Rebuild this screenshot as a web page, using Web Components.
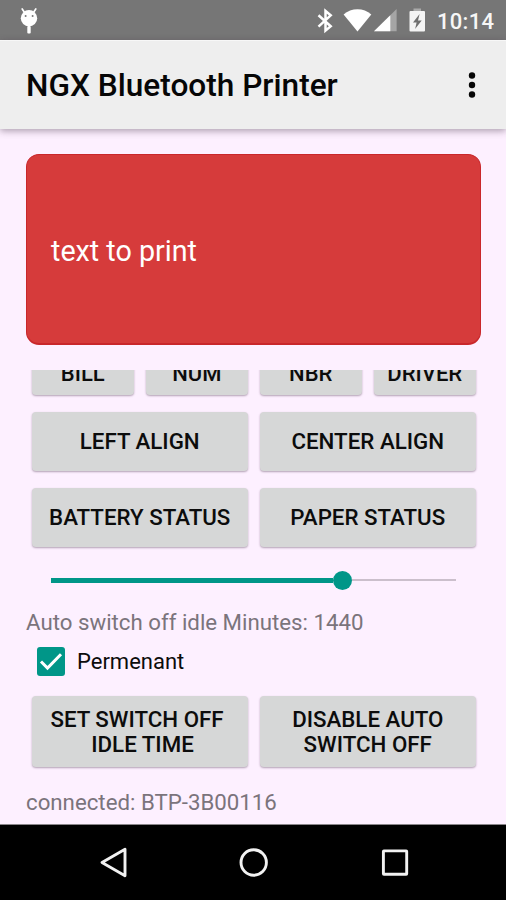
<!DOCTYPE html>
<html lang="en">
<head>
<meta charset="utf-8">
<title>NGX Bluetooth Printer</title>
<style>
html,body{margin:0;height:900px;overflow:hidden;background:#fdf0ff;font-family:Roboto,sans-serif}
</style>
</head>
<body>
<printer-app></printer-app>
<script>
const define = (name, markup) => customElements.define(name, class extends HTMLElement {
  constructor() {
    super();
    const t = document.createElement('template');
    t.innerHTML = markup;
    this.attachShadow({mode: 'open'}).append(t.content.cloneNode(true));
  }
});

define('status-bar', `
<style>
:host{display:flex;height:40px;background:#767676;color:#f6f6f6;align-items:center;flex:none}
svg{display:block;flex:none}
.grow{flex:1}
.clock{font-size:22px;font-weight:500;line-height:26px;letter-spacing:.3px;width:69px;white-space:nowrap;margin-top:3px}
</style>
<svg width="60" height="40" viewBox="0 0 60 40"><g fill="#fff"><circle cx="29" cy="18.3" r="8.2"/><rect x="27.3" y="26" width="3.4" height="7.5" rx="1"/></g><path d="M22.2 9l3 4.5M35.8 9l-3 4.5" stroke="#fff" stroke-width="1.7" stroke-linecap="round"/><circle cx="25.6" cy="16" r="1" fill="#777"/><circle cx="32.6" cy="16" r="1" fill="#777"/></svg>
<span class="grow"></span>
<svg width="132" height="40" viewBox="306 0 132 40">
<path d="M319.500 15.300L331.700 26.300l-5.200 4.300V11l5.200 4.300-12.200 11.300" fill="none" stroke="#fff" stroke-width="2.500"/>
<path d="M344.600 14.500C352.200 7.400 364.800 7.400 372.300 14.500L358.500 31.400z" fill="#fff"/>
<path d="M397.600 9v22.300h-22.600z" fill="#a5a5a5"/><path d="M391.300 15.200v16.100h-16.300z" fill="#fff"/>
<path d="M414.500 8.500h7.500v3h-7.500z" fill="#aaa"/><rect x="410.500" y="11" width="15.500" height="20.500" rx="1" fill="#f4f4f4"/>
<path d="M420.600 14l-6.600 8.500h3.600l-1.500 6.500 6.600-8.500h-3.700z" fill="#707070"/>
</svg>
<span class="clock">10:14</span>`);

define('app-bar', `
<style>
:host{display:flex;flex:none;box-sizing:border-box;height:89px;padding:0 26px;align-items:center;justify-content:space-between;background:#eee;border-top:1px solid #f7f7f7;box-shadow:0 2px 7px rgba(60,40,60,.42);z-index:1}
.title{font-size:31.600px;font-weight:500;line-height:34px;color:#060606;white-space:nowrap;margin-top:1px}
svg{margin-right:4px}
</style>
<div class="title"><slot></slot></div>
<svg width="8" height="28" viewBox="0 0 8 28" fill="#060606"><circle cx="4" cy="4.500" r="3.200"/><circle cx="4" cy="14" r="3.200"/><circle cx="4" cy="23.500" r="3.200"/></svg>`);

define('print-field', `
<style>
:host{display:flex;box-sizing:border-box;height:191px;margin:25px 25px 0 26px;padding:4px 0 0 24px;align-items:center;border-radius:13px;background:#d63b3b;border:solid #c9272b;border-width:1px 1px 2px 1px;color:#fff;font-size:28.700px;line-height:34px;flex:none;white-space:nowrap}
</style><slot></slot>`);

define('button-row', `
<style>
:host{display:grid;grid-auto-flow:column;grid-auto-columns:minmax(0,1fr);gap:11.500px;padding:0 30px 0 31.500px;height:59px;flex:none}
</style><slot></slot>`);

define('raised-button', `
<style>
:host{display:flex;align-items:center;justify-content:center;text-align:center;border-radius:4px;background:#d6d7d7;box-shadow:0 1px 2px rgba(70,45,70,.4);color:#0c0c0c;font-size:22.300px;font-weight:500;line-height:25px;white-space:pre}
</style><div><slot></slot></div>`);

define('scroll-clip', `
<style>
:host{display:flex;flex-direction:column;justify-content:flex-end;height:28px;margin-top:25px;overflow:hidden;flex:none;box-sizing:border-box;padding-bottom:3px}
</style><slot></slot>`);

define('idle-slider', `
<style>
:host{display:flex;align-items:center;height:20px;margin:23px 50px 0 51px;flex:none}
.on{width:282px;height:5px;background:#009688}
.thumb{width:19px;height:19px;border-radius:50%;background:#009688}
.off{flex:1;height:2px;background:#cbbfcc}
</style><span class="on"></span><span class="thumb"></span><span class="off"></span>`);

define('info-text', `
<style>:host{display:block;flex:none;height:28px;padding-left:26px;font-size:22.250px;line-height:28px;color:#7b747c;white-space:nowrap}</style><slot></slot>`);

define('check-option', `
<style>
:host{display:flex;align-items:center;gap:12px;height:30px;margin-left:37px;flex:none;font-size:22px;line-height:28px;color:#0c0c0c}
svg{display:block}
span{margin-top:1px}
</style>
<svg width="28" height="29" viewBox="0 0 28 29"><rect width="28" height="29" rx="3" fill="#009688"/><path d="M4 14.500l6.500 6.500L24 7.300" fill="none" stroke="#fff" stroke-width="3"/></svg>
<span><slot></slot></span>`);

define('nav-bar', `
<style>
:host{display:block;height:76px;background:#000;border-top:1px solid #8a868a;box-sizing:border-box;margin-top:auto;flex:none}
svg{display:block}
</style>
<svg width="506" height="75" viewBox="0 825 506 75" fill="none" stroke="#f2f2f2" stroke-width="2.900" stroke-linejoin="round"><path d="M102 862.400L125 849.200V875.700z"/><circle cx="253.700" cy="862.500" r="12.700"/><rect x="383.400" y="850.900" width="23.300" height="23.400" rx=".5"/></svg>`);

define('printer-app', `
<style>
:host{display:flex;flex-direction:column;width:506px;height:900px;background:#fdf0ff}
.r1{margin-top:14px}.r2{margin-top:17px}
idle-slider + info-text{margin-top:18px}
check-option{margin-top:10px}
.tall{height:71px;margin-top:20px}
.conn{margin-top:21px}
scroll-clip button-row{height:48px}
scroll-clip raised-button{padding-top:5px;font-size:22px}
</style>
<status-bar></status-bar>
<app-bar>NGX Bluetooth Printer</app-bar>
<print-field>text to print</print-field>
<scroll-clip><button-row><raised-button>BILL</raised-button><raised-button>NUM</raised-button><raised-button>NBR</raised-button><raised-button>DRIVER</raised-button></button-row></scroll-clip>
<button-row class="r1"><raised-button>LEFT ALIGN</raised-button><raised-button>CENTER ALIGN</raised-button></button-row>
<button-row class="r2"><raised-button>BATTERY STATUS</raised-button><raised-button>PAPER STATUS</raised-button></button-row>
<idle-slider></idle-slider>
<info-text>Auto switch off idle Minutes: 1440</info-text>
<check-option>Permenant</check-option>
<button-row class="tall"><raised-button>SET SWITCH OFF <br> IDLE TIME</raised-button><raised-button>DISABLE AUTO<br>SWITCH OFF</raised-button></button-row>
<info-text class="conn">connected: BTP-3B00116</info-text>
<nav-bar></nav-bar>`);
</script>
</body>
</html>
